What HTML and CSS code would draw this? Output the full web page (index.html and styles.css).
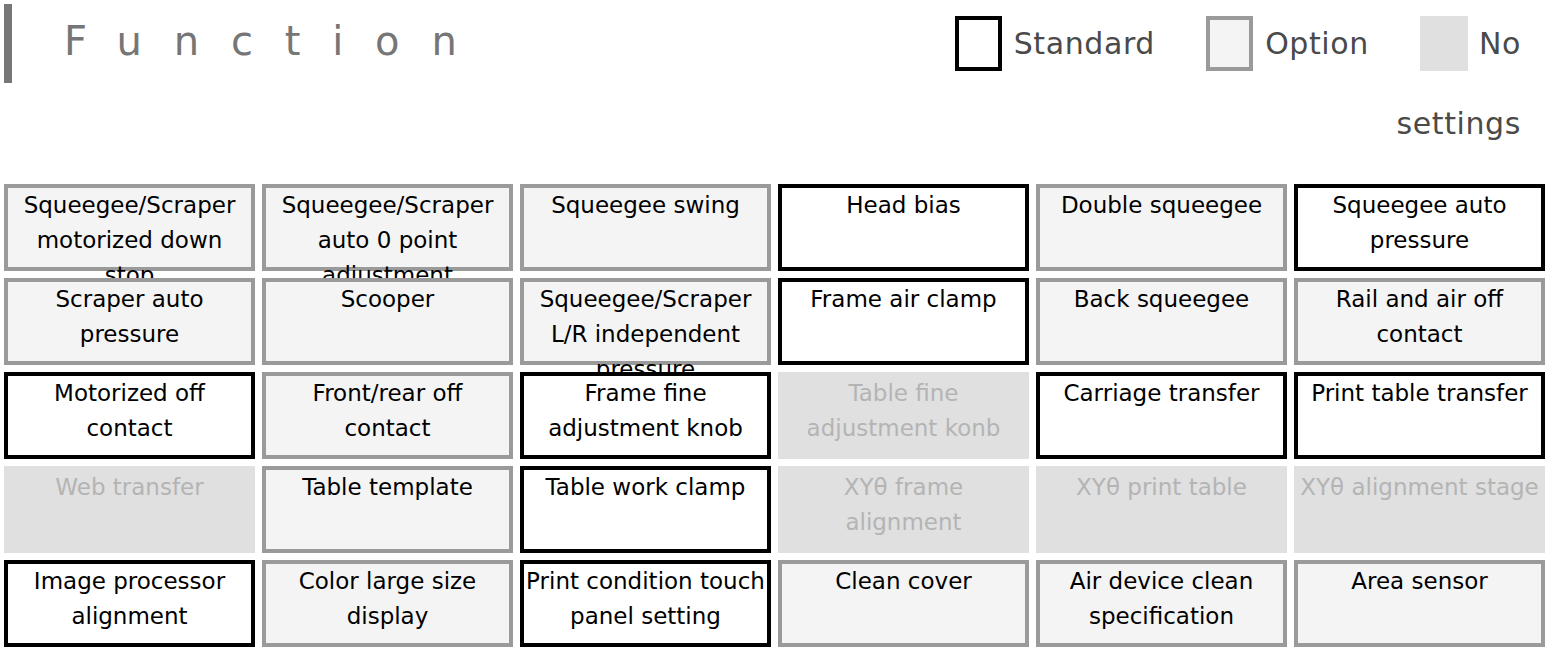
FILE: index.html
```html
<!DOCTYPE html>
<html lang="en">
<head>
<meta charset="utf-8">
<title>Function</title>
<link rel="stylesheet" href="styles.css">
</head>
<body>
<div class="page">
  <header class="head">
    <h1 class="title">Function</h1>
    <div class="legend">
      <span class="item"><span class="sw sw-std"></span>Standard</span>
      <span class="item"><span class="sw sw-opt"></span>Option</span>
      <span class="item"><span class="sw sw-no"></span>No settings</span>
    </div>
  </header>
  <div class="grid">
    <div class="cell opt">Squeegee/Scraper motorized down stop</div>
    <div class="cell opt">Squeegee/Scraper auto 0 point adjustment</div>
    <div class="cell opt">Squeegee swing</div>
    <div class="cell std">Head bias</div>
    <div class="cell opt">Double squeegee</div>
    <div class="cell std">Squeegee auto pressure</div>

    <div class="cell opt">Scraper auto pressure</div>
    <div class="cell opt">Scooper</div>
    <div class="cell opt">Squeegee/Scraper L/R independent pressure</div>
    <div class="cell std">Frame air clamp</div>
    <div class="cell opt">Back squeegee</div>
    <div class="cell opt">Rail and air off contact</div>

    <div class="cell std">Motorized off contact</div>
    <div class="cell opt">Front/rear off contact</div>
    <div class="cell std">Frame fine adjustment knob</div>
    <div class="cell no">Table fine adjustment konb</div>
    <div class="cell std">Carriage transfer</div>
    <div class="cell std">Print table transfer</div>

    <div class="cell no">Web transfer</div>
    <div class="cell opt">Table template</div>
    <div class="cell std">Table work clamp</div>
    <div class="cell no">XYθ frame alignment</div>
    <div class="cell no">XYθ print table</div>
    <div class="cell no">XYθ alignment stage</div>

    <div class="cell std">Image processor alignment</div>
    <div class="cell opt">Color large size display</div>
    <div class="cell std">Print condition touch panel setting</div>
    <div class="cell opt">Clean cover</div>
    <div class="cell opt">Air device clean specification</div>
    <div class="cell opt">Area sensor</div>
  </div>
</div>
</body>
</html>
```
FILE: styles.css
```css
html, body {
  margin: 0;
  padding: 0;
  background: #ffffff;
}

body {
  font-family: "DejaVu Sans", Verdana, sans-serif;
  color: #000;
}

.page {
  padding: 4px 8px 0 4px;
}

.head {
  display: flex;
  justify-content: space-between;
  align-items: flex-start;
}

.title {
  margin: 0;
  height: 79px;
  border-left: 8px solid #777777;
  padding-left: 52px;
  font-size: 40px;
  font-weight: normal;
  line-height: 74px;
  letter-spacing: 31.8px;
  color: #767676;
}

.legend {
  width: 600px;
  margin-right: 24px;
  text-align: right;
  font-size: 30px;
  line-height: 80px;
  letter-spacing: 0.6px;
  color: #4a4a4a;
}

.item {
  margin-left: 41px;
}

.item:first-child {
  margin-left: 0;
}

.sw {
  display: inline-block;
  box-sizing: border-box;
  width: 47px;
  height: 55px;
  margin-right: 12px;
  vertical-align: middle;
  position: relative;
  top: -2px;
}

.sw-std {
  border: 4px solid #000;
  background: #fff;
}

.sw-opt {
  border: 4px solid #9a9a9a;
  background: #f4f4f4;
}

.sw-no {
  width: 48px;
  margin-right: 11px;
  background: #e0e0e0;
}

.grid {
  margin-top: 20px;
  display: grid;
  grid-template-columns: repeat(6, 251px);
  grid-auto-rows: 87px;
  gap: 7px 7px;
}

.cell {
  box-sizing: border-box;
  border: 4px solid transparent;
  padding: 0 1px;
  font-size: 23px;
  line-height: 35px;
  text-align: center;
  overflow: visible;
}

.std {
  border-color: #000;
  background: #fff;
  color: #000;
}

.opt {
  border-color: #9a9a9a;
  background: #f4f4f4;
  color: #000;
}

.no {
  border-color: #e0e0e0;
  background: #e0e0e0;
  color: #b4b4b4;
}
```
